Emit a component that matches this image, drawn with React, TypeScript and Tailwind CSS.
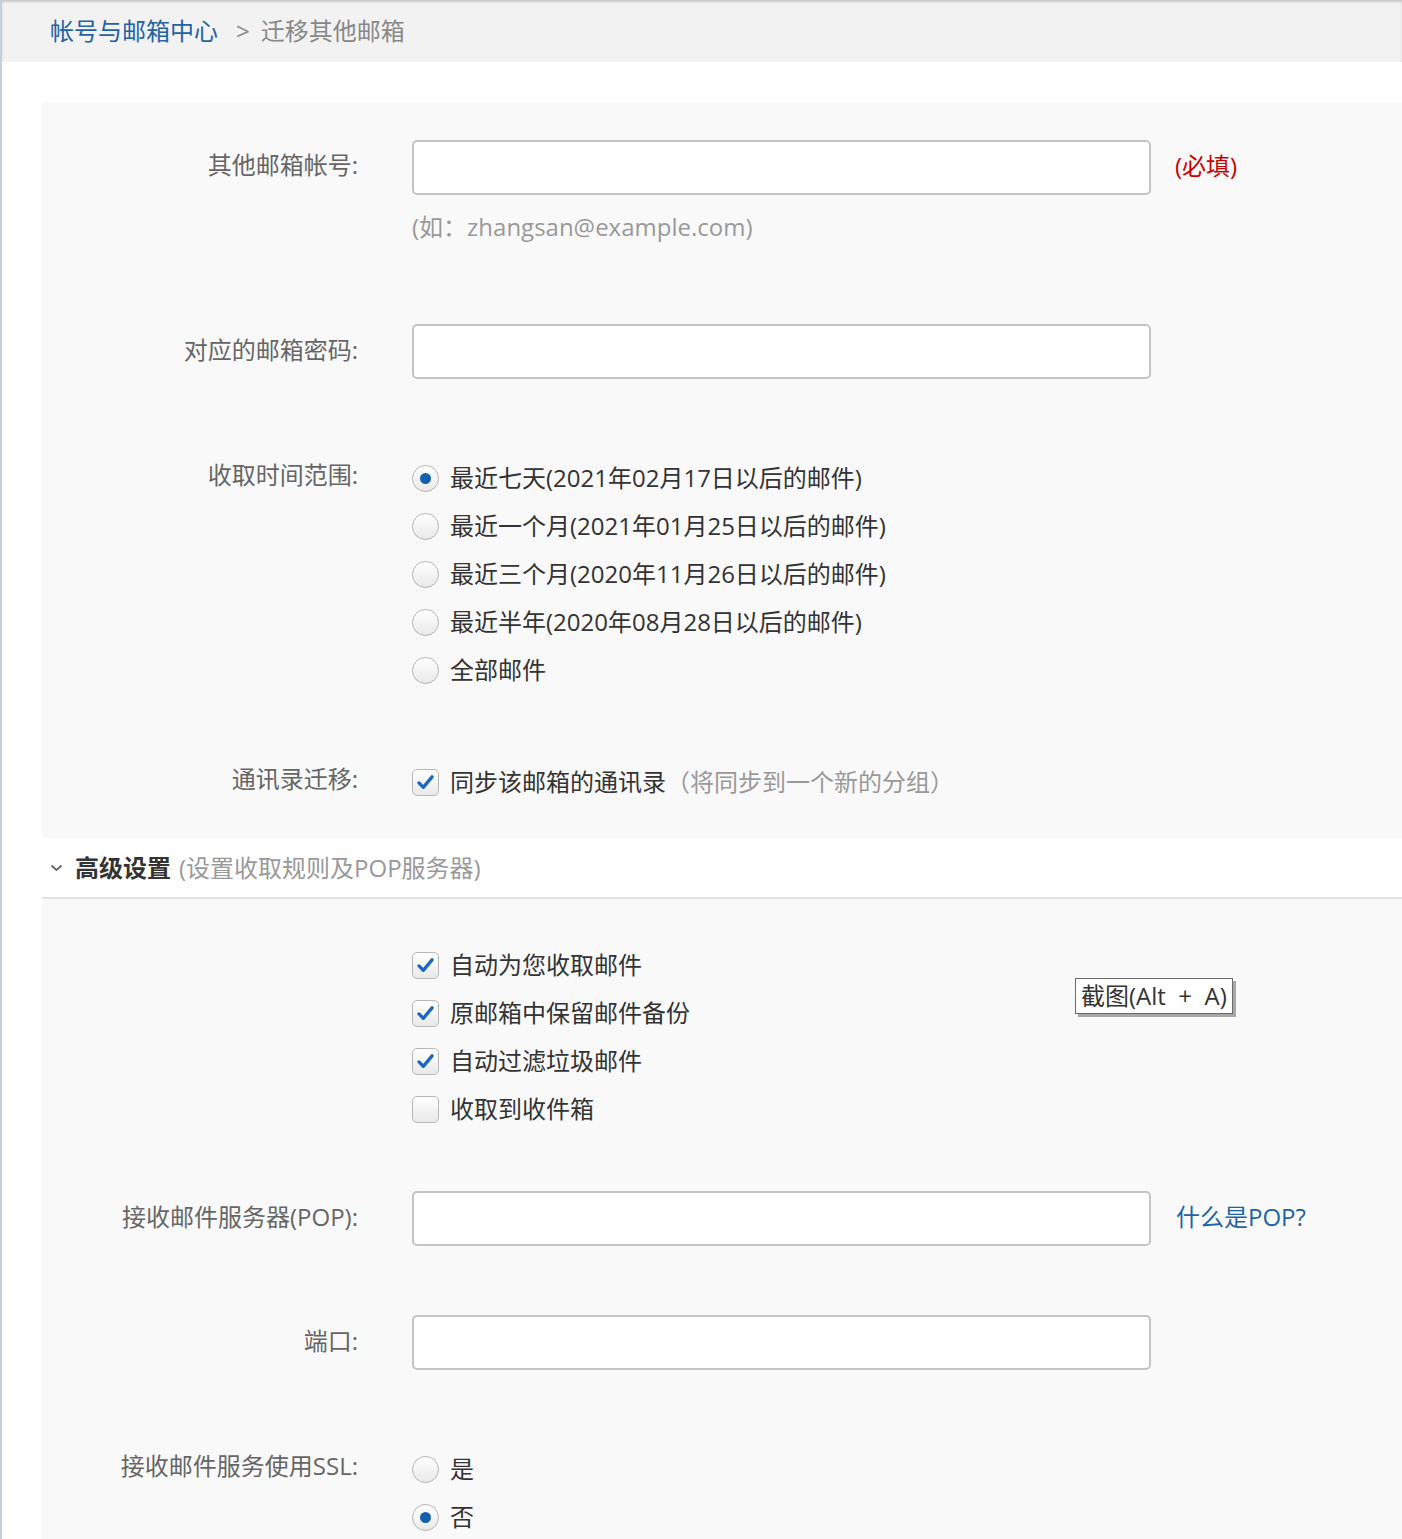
import React from "react";

const RANGES = [
  { label: "最近七天(2021年02月17日以后的邮件)", checked: true },
  { label: "最近一个月(2021年01月25日以后的邮件)", checked: false },
  { label: "最近三个月(2020年11月26日以后的邮件)", checked: false },
  { label: "最近半年(2020年08月28日以后的邮件)", checked: false },
  { label: "全部邮件", checked: false },
];

const OPTIONS = [
  { label: "自动为您收取邮件", checked: true },
  { label: "原邮箱中保留邮件备份", checked: true },
  { label: "自动过滤垃圾邮件", checked: true },
  { label: "收取到收件箱", checked: false },
];

function Radio({ checked }: { checked?: boolean }) {
  return (
    <span className="inline-flex size-[27px] shrink-0 items-center justify-center rounded-full border border-[#b4b4b4] bg-gradient-to-b from-white to-[#e9e9e9]">
      {checked && <span className="size-[11px] rounded-full bg-[#1560ae]" />}
    </span>
  );
}

function Checkbox({ checked }: { checked?: boolean }) {
  return (
    <span className="inline-flex size-[27px] shrink-0 items-center justify-center rounded-[5px] border border-[#b8b8b8] bg-gradient-to-b from-white to-[#e9e9e9]">
      {checked && (
        <svg viewBox="0 0 24 24" className="size-[21px]">
          <path
            d="M4.5 12.5 L9.5 17.5 L19.5 5.5"
            fill="none"
            stroke="#1b67c4"
            strokeWidth="3.8"
            strokeLinecap="round"
            strokeLinejoin="round"
          />
        </svg>
      )}
    </span>
  );
}

function Label({ children, className = "" }: { children: React.ReactNode; className?: string }) {
  return (
    <div className={`w-[316px] shrink-0 text-right text-[#666] ${className}`}>
      {children}
    </div>
  );
}

function TextInput() {
  return (
    <div className="ml-[54px] h-[55px] w-[739px] shrink-0 rounded-[5px] border-2 border-[#c4c4c4] bg-white" />
  );
}

export default function App() {
  return (
    <div
      className="min-h-[1539px] border-l-2 border-[#c6ced7] bg-white text-[24px] text-[#333]"
      style={{ fontFamily: "'Open Sans', 'Noto Sans CJK SC', sans-serif" }}
    >
      {/* breadcrumb */}
      <div className="flex h-[62px] items-center bg-[#f2f2f2] pl-[48px] shadow-[inset_0_2px_2px_rgba(0,0,0,0.16)]">
        <span className="text-[#2461a3]">帐号与邮箱中心</span>
        <span className="ml-[18px] mr-[11px] text-[#888]">&gt;</span>
        <span className="text-[#888]">迁移其他邮箱</span>
      </div>

      {/* basic */}
      <div className="ml-[40px] mt-[40px] rounded-bl-[6px] bg-[#f9f9f9] pb-[32px] pt-[38px]">
        <div className="flex h-[55px] items-center">
          <Label className="pb-[5px]">其他邮箱帐号:</Label>
          <TextInput />
          <span className="ml-[24px] pb-[3px] text-[#cc0000]">(必填)</span>
        </div>
        <div className="mt-[16px] pl-[370px] leading-[32px] text-[#999]">(如：zhangsan@example.com)</div>

        <div className="mt-[81px] flex h-[55px] items-center">
          <Label className="pb-[3px]">对应的邮箱密码:</Label>
          <TextInput />
        </div>

        <div className="mt-[75px] flex items-start">
          <Label className="leading-[42px]">收取时间范围:</Label>
          <div className="ml-[54px] flex flex-col">
            {RANGES.map((r) => (
              <label key={r.label} className="flex h-[48px] items-center gap-[11px]">
                <Radio checked={r.checked} />
                <span>{r.label}</span>
              </label>
            ))}
          </div>
        </div>

        <div className="mt-[64px] flex items-start">
          <Label className="leading-[42px]">通讯录迁移:</Label>
          <label className="ml-[54px] flex h-[48px] items-center gap-[11px]">
            <Checkbox checked />
            <span>
              同步该邮箱的通讯录<span className="text-[#999]">（将同步到一个新的分组）</span>
            </span>
          </label>
        </div>
      </div>

      {/* advanced header */}
      <div className="ml-[40px] flex h-[61px] items-center border-b-2 border-[#e2e2e2] pl-[8px]">
        <svg viewBox="0 0 12 8" className="h-[8px] w-[13px]">
          <path d="M1 1.5 L6 6 L11 1.5" fill="none" stroke="#666" strokeWidth="1.8" />
        </svg>
        <span className="ml-[12px] font-bold text-[#333]">高级设置</span>
        <span className="ml-[8px] text-[#999]">(设置收取规则及POP服务器)</span>
      </div>

      {/* advanced */}
      <div className="relative ml-[40px] bg-[#f9f9f9] pb-[20px] pt-[42px]">
        <div className="flex flex-col pl-[370px]">
          {OPTIONS.map((o) => (
            <label key={o.label} className="flex h-[48px] items-center gap-[11px]">
              <Checkbox checked={o.checked} />
              <span>{o.label}</span>
            </label>
          ))}
        </div>

        <div className="absolute left-[1033px] top-[79px] w-[158px] whitespace-pre border border-[#6b6b6b] bg-white px-[5px] leading-[34px] text-[#333] shadow-[3px_3px_0_#a8a8a8]">
          截图(Alt  +  A)
        </div>

        <div className="mt-[58px] flex h-[55px] items-center">
          <Label className="pb-[3px]">接收邮件服务器(POP):</Label>
          <TextInput />
          <span className="ml-[25px] pb-[3px] text-[#1d64a8]">什么是POP?</span>
        </div>

        <div className="mt-[69px] flex h-[55px] items-center">
          <Label className="pb-[3px]">端口:</Label>
          <TextInput />
        </div>

        <div className="mt-[75px] flex items-start">
          <Label className="leading-[42px]">接收邮件服务使用SSL:</Label>
          <div className="ml-[54px] flex flex-col">
            <label className="flex h-[48px] items-center gap-[11px]">
              <Radio />
              <span>是</span>
            </label>
            <label className="flex h-[48px] items-center gap-[11px]">
              <Radio checked />
              <span>否</span>
            </label>
          </div>
        </div>
      </div>
    </div>
  );
}
